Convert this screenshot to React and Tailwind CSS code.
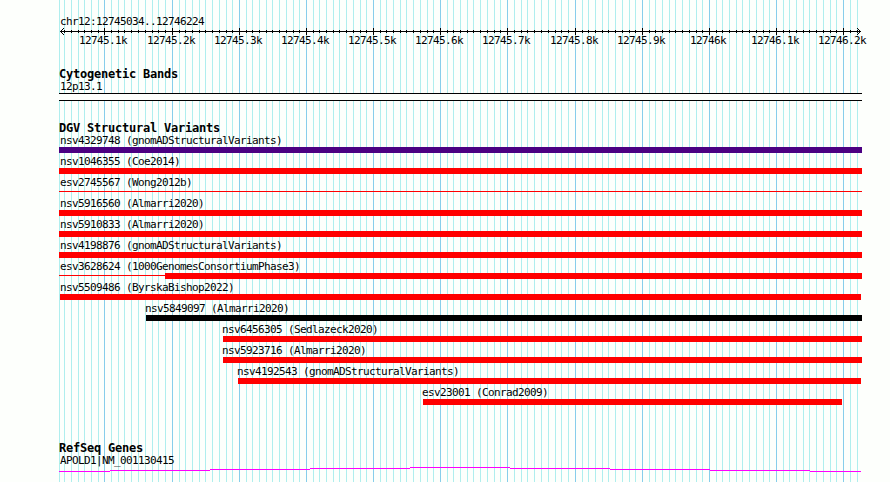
import React from 'react';

const rulerMarks = [
  { x: 45, label: '12745.1k' },
  { x: 113, label: '12745.2k' },
  { x: 180, label: '12745.3k' },
  { x: 247, label: '12745.4k' },
  { x: 314, label: '12745.5k' },
  { x: 381, label: '12745.6k' },
  { x: 448, label: '12745.7k' },
  { x: 516, label: '12745.8k' },
  { x: 583, label: '12745.9k' },
  { x: 650, label: '12746k' },
  { x: 717, label: '12746.1k' },
  { x: 784, label: '12746.2k' },
];

//minor ticks: before the first mark, between marks, after the last one
const minorTicks = [5, 12, 19, 25, 32, 39, 791, 798];
rulerMarks.slice(0, -1).forEach((mark, i) => {
  const step = (rulerMarks[i + 1].x - mark.x) / 10;
  for (let k = 1; k < 10; k++) {
    minorTicks.push(mark.x + Math.round(step * k - 0.05));
  }
});

const variants = [
  { id: 'nsv4329748', study: 'gnomADStructuralVariants', start: 0, end: 803, color: 'bg-[#4b0082]' },
  { id: 'nsv1046355', study: 'Coe2014', start: 0, end: 803, color: 'bg-[#ff0000]' },
  { id: 'esv2745567', study: 'Wong2012b', start: 0, end: 803, color: 'bg-[#ff0000]', thin: 803 },
  { id: 'nsv5916560', study: 'Almarri2020', start: 0, end: 803, color: 'bg-[#ff0000]' },
  { id: 'nsv5910833', study: 'Almarri2020', start: 0, end: 803, color: 'bg-[#ff0000]' },
  { id: 'nsv4198876', study: 'gnomADStructuralVariants', start: 0, end: 803, color: 'bg-[#ff0000]' },
  { id: 'esv3628624', study: '1000GenomesConsortiumPhase3', start: 0, end: 803, color: 'bg-[#ff0000]', thin: 106 },
  { id: 'nsv5509486', study: 'ByrskaBishop2022', start: 1, end: 802, color: 'bg-[#ff0000]' },
  { id: 'nsv5849097', study: 'Almarri2020', start: 87, end: 803, color: 'bg-black' },
  { id: 'nsv6456305', study: 'Sedlazeck2020', start: 164, end: 803, color: 'bg-[#ff0000]' },
  { id: 'nsv5923716', study: 'Almarri2020', start: 164, end: 803, color: 'bg-[#ff0000]' },
  { id: 'nsv4192543', study: 'gnomADStructuralVariants', start: 179, end: 802, color: 'bg-[#ff0000]' },
  { id: 'esv23001', study: 'Conrad2009', start: 364, end: 783, color: 'bg-[#ff0000]' },
];

const Label = ({ indent = 'pl-px', children }) => (
  <p className={`h-3 text-[11px] leading-[14px] tracking-[-0.623px] whitespace-pre ${indent}`}>{children}</p>
);

const TrackTitle = ({ children }) => (
  <h2 className="h-3 text-[12px] leading-3 font-bold tracking-[-0.224px] whitespace-pre">{children}</h2>
);

//vertical guide lines behind all tracks
const Grid = () => (
  <svg className="absolute inset-0" width="803" height="482" shapeRendering="crispEdges">
    <rect x="0" y="0" width="1" height="482" fill="#afeeee" />
    {minorTicks.map((x) => (
      <rect key={x} x={x} y="0" width="1" height="482" fill="#afeeee" />
    ))}
    {rulerMarks.map(({ x }) => (
      <rect key={x} x={x} y="0" width="1" height="482" fill="#87ceeb" />
    ))}
  </svg>
);

const Ruler = () => (
  <div className="relative h-[21px]">
    <svg className="block" width="804" height="9" shapeRendering="crispEdges">
      <rect x="1" y="4" width="801" height="1" />
      {minorTicks.map((x) => (
        <rect key={x} x={x} y="3" width="1" height="3" />
      ))}
      {rulerMarks.map(({ x }) => (
        <rect key={x} x={x} y="1" width="1" height="7" />
      ))}
      {/* arrow heads */}
      {[1, 2, 3].map((d) => (
        <g key={d}>
          <rect x={1 + d} y={4 - d} width="1" height="1" />
          <rect x={1 + d} y={4 + d} width="1" height="1" />
          <rect x={801 - d} y={4 - d} width="1" height="1" />
          <rect x={801 - d} y={4 + d} width="1" height="1" />
        </g>
      ))}
    </svg>
    {rulerMarks.map(({ x, label }) => (
      <span
        key={label}
        className="absolute top-[8px] -translate-x-1/2 text-[11px] leading-3 tracking-[-0.623px]"
        style={{ left: x - 1 }}
      >
        {label}
      </span>
    ))}
  </div>
);

const Variant = ({ id, study, start, end, color, thin = 0 }) => (
  <div className="h-[21px]" style={{ marginLeft: start, width: end - start }}>
    <Label indent={start === 0 ? 'pl-px' : start === 1 ? 'pl-0' : '-ml-px'}>{id} ({study})</Label>
    <div className="mt-px flex h-1.5 items-start">
      <div className={`mt-0.5 h-px ${color}`} style={{ width: thin }} />
      <div className={`h-1.5 flex-1 ${color}`} />
    </div>
  </div>
);

const App = () => {
  return (
    <div className="h-[482px] w-[890px] overflow-hidden bg-[#fdfffc] pl-[59px] font-['DejaVu_Sans_Mono',monospace] text-black">
      <div className="relative h-full w-[803px]">
        <Grid />
        <div className="relative flex flex-col pt-[15px]">
          <Label>chr12:12745034..12746224</Label>
          <Ruler />

          {/* Cytogenetic band */}
          <section className="mt-5">
            <TrackTitle>Cytogenetic Bands</TrackTitle>
            <Label>12p13.1</Label>
            <div className="mt-px h-2 border-y border-black bg-[#fdfffc]" />
          </section>

          {/* Structural variants */}
          <section className="mt-[21px]">
            <TrackTitle>DGV Structural Variants</TrackTitle>
            {variants.map((variant) => (
              <Variant key={variant.id} {...variant} />
            ))}
          </section>

          {/* Genes */}
          <section className="mt-[35px]">
            <TrackTitle>RefSeq Genes</TrackTitle>
            <Label>APOLD1|NM_001130415</Label>
            <svg className="block" width="803" height="6" shapeRendering="crispEdges">
              <path
                d="M0 5.5H51M51 4.5H151M151 3.5H251M251 2.5H351M351 1.5H451M451 2.5H551M551 3.5H651M651 4.5H751M751 5.5H802"
                fill="none"
                stroke="#ff00ff"
              />
            </svg>
          </section>
        </div>
      </div>
    </div>
  );
};

export default App;
